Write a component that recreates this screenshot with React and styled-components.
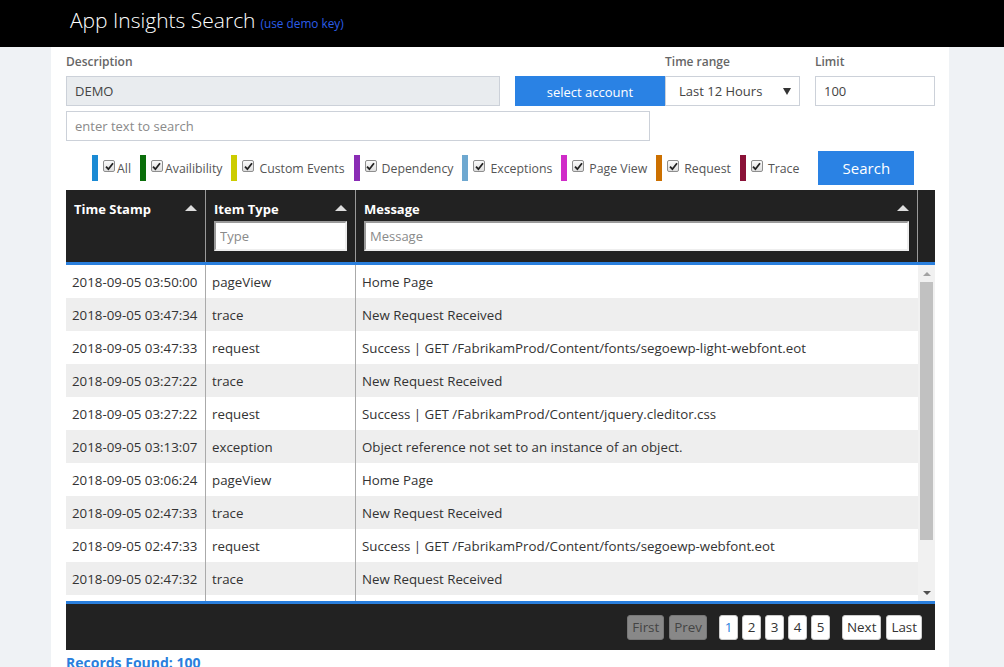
import styled, { createGlobalStyle } from 'styled-components';

const GlobalStyle = createGlobalStyle`
    html, body {
        margin: 0;
        padding: 0;
        background: #eff2f5;
    }
    body {
        font-family: "Open Sans", "Noto Sans", sans-serif;
        font-size: 13px;
        color: #333;
    }
    * {
        box-sizing: border-box;
    }
`;

const Header = styled.header`
    height: 47px;
    background: #000;
    display: flex;
    align-items: baseline;
    padding: 5px 0 0 70px;
`;

const Brand = styled.h1`
    margin: 0;
    font-size: 21px;
    font-weight: 300;
    color: #fff;
    line-height: 30px;
`;

const DemoKey = styled.a`
    margin-left: 5px;
    font-size: 11.8px;
    color: #2b5de8;
    text-decoration: none;
`;

const Panel = styled.main`
    width: 898px;
    margin-left: 51px;
    min-height: 620px;
    background: #fff;
    padding: 7px 14px 0 15px;
`;

const FormRow = styled.div`
    display: flex;
    align-items: flex-end;
    margin-top: ${(props) => props.$top || 0}px;
`;

const Field = styled.div`
    display: flex;
    flex-direction: column;
    width: ${(props) => props.$width}px;
    margin-left: ${(props) => props.$left || 0}px;
`;

const Label = styled.label`
    font-size: 12px;
    font-weight: 600;
    color: #666;
    line-height: 16px;
    margin-bottom: 6px;
`;

const Input = styled.input`
    width: ${(props) => (props.$width ? `${props.$width}px` : '100%')};
    height: 30px;
    border: 1px solid #ccd1d9;
    padding: 0 8px;
    font-family: inherit;
    font-size: 13px;
    color: #444;
    background: ${(props) => (props.readOnly ? '#e9ecef' : '#fff')};
    outline: none;

    &::placeholder {
        color: #8a8a8a;
    }
`;

const AccountButton = styled.button`
    width: 150px;
    height: 30px;
    margin-left: 15px;
    border: none;
    background: #2a82e4;
    color: #fff;
    font-family: inherit;
    font-size: 13px;
    padding: 2px 0 0;
`;

const Select = styled.div`
    height: 30px;
    border: 1px solid #ccd1d9;
    display: flex;
    align-items: center;
    justify-content: space-between;
    padding: 0 6px 0 13px;
    font-size: 13px;
    color: #444;
`;

const Caret = styled.span`
    width: 0;
    height: 0;
    border-left: 4px solid transparent;
    border-right: 4px solid transparent;
    border-top: 7px solid #333;
    margin-right: 2px;
`;

const FilterRow = styled.div`
    display: flex;
    align-items: center;
    height: 34px;
    margin-top: 10px;
    padding-left: 26px;
`;

const Filter = styled.label`
    display: flex;
    align-items: center;
    flex-shrink: 0;
    white-space: nowrap;
    margin-right: 9px;
    color: #555;
    font-size: 12.3px;
`;

const ColorBar = styled.span`
    width: 6px;
    height: 26px;
    background: ${(props) => props.$color};
    margin-right: 5px;
`;

const Check = styled.span`
    width: 12px;
    height: 12px;
    border: 1px solid #8e8e8e;
    border-radius: 2px;
    background: linear-gradient(#fbfbfb, #dedede);
    display: flex;
    align-items: center;
    justify-content: center;
    margin-right: ${(props) => (props.$tight ? 2 : 5)}px;
    margin-top: -4px;
`;

const SearchButton = styled.button`
    width: 96px;
    height: 34px;
    flex-shrink: 0;
    margin-left: 10px;
    border: none;
    background: #2a82e4;
    color: #fff;
    font-family: inherit;
    font-size: 15px;
`;

const Table = styled.div`
    margin-top: 5px;
    width: 869px;
`;

const HeadRow = styled.div`
    display: grid;
    grid-template-columns: 139px 150px 1fr 18px;
    height: 75px;
    background: #222;
    border-bottom: 3px solid #2a7fdd;
`;

const HeadCell = styled.div`
    position: relative;
    padding: 9px 8px 0;
    border-left: ${(props) => (props.$first ? 'none' : '1px solid #9a9a9a')};
`;

const HeadTitle = styled.div`
    color: #fff;
    font-weight: 700;
    font-size: 13px;
    line-height: 20px;
`;

const SortArrow = styled.span`
    position: absolute;
    right: 8px;
    top: 15px;
    width: 0;
    height: 0;
    border-left: 6px solid transparent;
    border-right: 6px solid transparent;
    border-bottom: 6px solid #ddd;
`;

const HeadInput = styled.input`
    width: 100%;
    height: 30px;
    margin-top: 2px;
    border: 2px solid;
    border-color: #9a9a9a #eee #eee #9a9a9a;
    padding: 0 4px;
    font-family: inherit;
    font-size: 13px;
    outline: none;

    &::placeholder {
        color: #8a8a8a;
    }
`;

const Body = styled.div`
    display: flex;
    height: 339px;
    border-bottom: 3px solid #2a7fdd;
`;

const Rows = styled.div`
    flex: 1;
    overflow: hidden;
    background: #fff;
`;

const Row = styled.div`
    display: grid;
    grid-template-columns: 139px 150px 1fr;
    height: 33px;
    background: ${(props) => (props.$odd ? '#eeeeee' : '#fff')};
`;

const Cell = styled.div`
    padding: 1px 6px 0;
    line-height: 32px;
    font-size: 13.3px;
    white-space: nowrap;
    overflow: hidden;
    color: #333;
    border-left: ${(props) => (props.$first ? 'none' : '1px solid #aaa')};
`;

const RowFiller = styled.div`
    display: grid;
    grid-template-columns: 139px 150px 1fr;
    height: 6px;

    & > div + div {
        border-left: 1px solid #aaa;
    }
`;

const Scrollbar = styled.div`
    width: 17px;
    background: #f1f1f1;
    display: flex;
    flex-direction: column;
`;

const ScrollButton = styled.div`
    height: 17px;
    display: flex;
    align-items: center;
    justify-content: center;
`;

const Arrow = styled.span`
    width: 0;
    height: 0;
    border-left: 4px solid transparent;
    border-right: 4px solid transparent;
    ${(props) =>
        props.$down
            ? 'border-top: 4px solid #505050;'
            : 'border-bottom: 4px solid #a3a3a3;'}
`;

const Thumb = styled.div`
    height: 258px;
    margin: 0 2px;
    background: #c1c1c1;
`;

const Track = styled.div`
    flex: 1;
`;

const Pager = styled.div`
    height: 46px;
    background: #222;
    display: flex;
    align-items: center;
    justify-content: flex-end;
    padding-right: 13px;
`;

const PageGroup = styled.div`
    display: flex;
    gap: ${(props) => props.$gap}px;
    margin-left: 12px;
`;

const PageButton = styled.button`
    height: 25px;
    padding: 0 4px;
    min-width: 19px;
    border: 1px solid ${(props) => (props.disabled ? '#777' : '#ccc')};
    border-radius: 3px;
    background: ${(props) => (props.disabled ? '#888' : '#fff')};
    color: ${(props) => (props.disabled ? '#444' : props.$active ? '#2a7fdd' : '#333')};
    font-family: inherit;
    font-size: 13.4px;
`;

const Records = styled.div`
    margin-top: 3px;
    color: #2a7fdd;
    font-weight: 700;
    font-size: 14px;
`;

const filters = [
    { label: 'All', color: '#1a8ad4', tight: true },
    { label: 'Availibility', color: '#0a6e0a', tight: true },
    { label: 'Custom Events', color: '#cccc00' },
    { label: 'Dependency', color: '#8a2cb5' },
    { label: 'Exceptions', color: '#6ea8d0' },
    { label: 'Page View', color: '#d02bc8' },
    { label: 'Request', color: '#cc7000' },
    { label: 'Trace', color: '#8a1238' },
];

const rows = [
    ['2018-09-05 03:50:00', 'pageView', 'Home Page'],
    ['2018-09-05 03:47:34', 'trace', 'New Request Received'],
    ['2018-09-05 03:47:33', 'request', 'Success | GET /FabrikamProd/Content/fonts/segoewp-light-webfont.eot'],
    ['2018-09-05 03:27:22', 'trace', 'New Request Received'],
    ['2018-09-05 03:27:22', 'request', 'Success | GET /FabrikamProd/Content/jquery.cleditor.css'],
    ['2018-09-05 03:13:07', 'exception', 'Object reference not set to an instance of an object.'],
    ['2018-09-05 03:06:24', 'pageView', 'Home Page'],
    ['2018-09-05 02:47:33', 'trace', 'New Request Received'],
    ['2018-09-05 02:47:33', 'request', 'Success | GET /FabrikamProd/Content/fonts/segoewp-webfont.eot'],
    ['2018-09-05 02:47:32', 'trace', 'New Request Received'],
];

const CheckMark = () => (
    <svg width="9" height="9" viewBox="0 0 9 9">
        <path d="M1 4.6 L3.4 7.2 L8 1.2" fill="none" stroke="#222" strokeWidth="1.8" />
    </svg>
);

const App = () => {
    return (
        <>
            <GlobalStyle />
            <Header>
                <Brand>App Insights Search</Brand>
                <DemoKey href="#">(use demo key)</DemoKey>
            </Header>
            <Panel>
                <FormRow>
                    <Field $width={434}>
                        <Label>Description</Label>
                        <Input readOnly value="DEMO" />
                    </Field>
                    <AccountButton>select account</AccountButton>
                    <Field $width={135}>
                        <Label>Time range</Label>
                        <Select>
                            Last 12 Hours
                            <Caret />
                        </Select>
                    </Field>
                    <Field $width={120} $left={15}>
                        <Label>Limit</Label>
                        <Input defaultValue="100" />
                    </Field>
                </FormRow>
                <FormRow $top={5}>
                    <Input $width={584} placeholder="enter text to search" />
                </FormRow>
                <FilterRow>
                    {filters.map((f) => (
                        <Filter key={f.label}>
                            <ColorBar $color={f.color} />
                            <Check $tight={f.tight}>
                                <CheckMark />
                            </Check>
                            {f.label}
                        </Filter>
                    ))}
                    <SearchButton>Search</SearchButton>
                </FilterRow>
                <Table>
                    <HeadRow>
                        <HeadCell $first>
                            <HeadTitle>Time Stamp</HeadTitle>
                            <SortArrow />
                        </HeadCell>
                        <HeadCell>
                            <HeadTitle>Item Type</HeadTitle>
                            <SortArrow />
                            <HeadInput placeholder="Type" />
                        </HeadCell>
                        <HeadCell>
                            <HeadTitle>Message</HeadTitle>
                            <SortArrow />
                            <HeadInput placeholder="Message" />
                        </HeadCell>
                        <HeadCell />
                    </HeadRow>
                    <Body>
                        <Rows>
                            {rows.map((r, i) => (
                                <Row key={i} $odd={i % 2 === 1}>
                                    <Cell $first>{r[0]}</Cell>
                                    <Cell>{r[1]}</Cell>
                                    <Cell>{r[2]}</Cell>
                                </Row>
                            ))}
                            <RowFiller>
                                <div />
                                <div />
                                <div />
                            </RowFiller>
                        </Rows>
                        <Scrollbar>
                            <ScrollButton>
                                <Arrow />
                            </ScrollButton>
                            <Thumb />
                            <Track />
                            <ScrollButton>
                                <Arrow $down />
                            </ScrollButton>
                        </Scrollbar>
                    </Body>
                    <Pager>
                        <PageGroup $gap={5}>
                            <PageButton disabled>First</PageButton>
                            <PageButton disabled>Prev</PageButton>
                        </PageGroup>
                        <PageGroup $gap={4}>
                            {[1, 2, 3, 4, 5].map((n) => (
                                <PageButton key={n} $active={n === 1}>
                                    {n}
                                </PageButton>
                            ))}
                        </PageGroup>
                        <PageGroup $gap={5}>
                            <PageButton>Next</PageButton>
                            <PageButton>Last</PageButton>
                        </PageGroup>
                    </Pager>
                </Table>
                <Records>Records Found: 100</Records>
            </Panel>
        </>
    );
};

export default App;
